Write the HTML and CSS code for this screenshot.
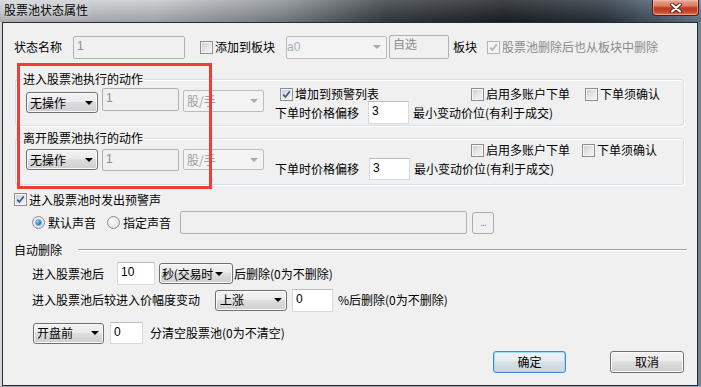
FILE: index.html
```html
<!DOCTYPE html>
<html lang="zh-CN">
<head>
    <meta charset="UTF-8">
    <meta name="viewport" content="width=device-width, initial-scale=1.0">
    <title>股票池状态属性</title>
    <link rel="stylesheet" href="styles.css">
</head>
<body>

<div class="window">
    <!-- Title bar -->
    <div class="titlebar">
        <span class="title">股票池状态属性</span>
        <div class="close-btn">
            <svg width="12" height="10" viewBox="0 0 12 10">
                <path d="M2 1.5 L10 8.5 M10 1.5 L2 8.5" stroke="#3b2622" stroke-width="4" stroke-linecap="round"/>
                <path d="M2 1.5 L10 8.5 M10 1.5 L2 8.5" stroke="#fff" stroke-width="2.2" stroke-linecap="round"/>
            </svg>
        </div>
    </div>

    <div class="client">
        <!-- Name / block row -->
        <div class="row row-name">
            <span>状态名称</span>
            <div class="edit disabled name-edit">1</div>
            <label class="check add-block"><span class="box"></span>添加到板块</label>
            <div class="combo disabled block-combo"><span class="combo-text">a0</span><span class="arrow"></span></div>
            <div class="edit disabled self-edit">自选</div>
            <span class="block-label">板块</span>
            <label class="check disabled del-too">
                <span class="box checked"><svg width="9" height="9" viewBox="0 0 9 9"><path d="M1.2 4.6 L3.4 7 L7.8 1.4" fill="none" stroke-width="1.7"/></svg></span>股票池删除后也从板块中删除
            </label>
        </div>

        <!-- Enter pool actions -->
        <div class="group group-enter">
            <span class="legend">进入股票池执行的动作</span>
            <div class="select action-select">无操作<span class="arrow"></span></div>
            <div class="edit disabled qty-edit">1</div>
            <div class="combo disabled unit-combo"><span class="combo-text">股/手</span><span class="arrow"></span></div>
            <div class="order-opts">
                <div class="opts-checks">
                    <label class="check warn-list">
                        <span class="box checked"><svg width="9" height="9" viewBox="0 0 9 9"><path d="M1.2 4.6 L3.4 7 L7.8 1.4" fill="none" stroke-width="1.7"/></svg></span>增加到预警列表
                    </label>
                    <label class="check multi"><span class="box"></span>启用多账户下单</label>
                    <label class="check confirm"><span class="box"></span>下单须确认</label>
                </div>
                <div class="opts-price">
                    <span>下单时价格偏移</span>
                    <div class="edit price-edit">3</div>
                    <span class="tick-text">最小变动价位(有利于成交)</span>
                </div>
            </div>
        </div>

        <!-- Leave pool actions -->
        <div class="group group-leave">
            <span class="legend">离开股票池执行的动作</span>
            <div class="select action-select">无操作<span class="arrow"></span></div>
            <div class="edit disabled qty-edit">1</div>
            <div class="combo disabled unit-combo"><span class="combo-text">股/手</span><span class="arrow"></span></div>
            <div class="order-opts">
                <div class="opts-checks">
                    <label class="check multi"><span class="box"></span>启用多账户下单</label>
                    <label class="check confirm"><span class="box"></span>下单须确认</label>
                </div>
                <div class="opts-price">
                    <span>下单时价格偏移</span>
                    <div class="edit price-edit">3</div>
                    <span class="tick-text">最小变动价位(有利于成交)</span>
                </div>
            </div>
        </div>

        <!-- Alarm sound -->
        <div class="row alarm-row">
            <label class="check">
                <span class="box checked"><svg width="9" height="9" viewBox="0 0 9 9"><path d="M1.2 4.6 L3.4 7 L7.8 1.4" fill="none" stroke-width="1.7"/></svg></span>进入股票池时发出预警声
            </label>
        </div>
        <div class="row sound-row">
            <label class="radio-item"><span class="radio on"></span>默认声音</label>
            <label class="radio-item second"><span class="radio"></span>指定声音</label>
            <div class="edit disabled sound-edit"></div>
            <div class="browse-btn">...</div>
        </div>

        <!-- Auto delete -->
        <div class="row autodel-row">
            <span>自动删除</span>
            <div class="sep"></div>
        </div>
        <div class="row sub-row after-row">
            <span>进入股票池后</span>
            <div class="edit sec-edit">10</div>
            <div class="select sec-select"><span class="sel-text">秒(交易时</span><span class="arrow"></span></div>
            <span class="after-text">后删除(0为不删除)</span>
        </div>
        <div class="row sub-row change-row">
            <span>进入股票池后较进入价幅度变动</span>
            <div class="select up-select">上涨<span class="arrow"></span></div>
            <div class="edit pct-edit">0</div>
            <span class="pct-text">%后删除(0为不删除)</span>
        </div>
        <div class="row clear-row">
            <div class="select open-select">开盘前<span class="arrow"></span></div>
            <div class="edit clear-edit">0</div>
            <span class="clear-text">分清空股票池(0为不清空)</span>
        </div>

        <!-- Dialog buttons -->
        <div class="row btn-row">
            <div class="btn default">确定</div>
            <div class="btn">取消</div>
        </div>

        <!-- red annotation frame -->
        <div class="mark"></div>
    </div>
</div>

</body>
</html>
```

FILE: styles.css
```css
* {
    box-sizing: border-box;
}

body {
    margin: 0;
    width: 701px;
    height: 387px;
    overflow: hidden;
    font-family: "Noto Sans CJK SC", "Liberation Sans", sans-serif;
    font-size: 12px;
    line-height: 14px;
    color: #000;
    white-space: nowrap;
}

.window {
    display: flex;
    flex-direction: column;
    height: 387px;
    background:
        linear-gradient(to top, #93a9c0 0, #93a9c0 1px, transparent 1px),
        linear-gradient(to bottom, rgba(255, 255, 255, 0.15), rgba(0, 0, 0, 0.2) 22px, transparent 22px),
        linear-gradient(to right, #d5d8db 0%, #c4c8cc 22%, #8d9399 40%, #3c4248 55%, #1e2328 72%, #2d3741 86%, #6f869e 100%);
}

/* title bar */
.titlebar {
    height: 22px;
    display: flex;
    align-items: flex-start;
    flex-shrink: 0;
}

.title {
    padding: 2px 0 0 4px;
    line-height: 16px;
    text-shadow: 0 0 6px rgba(255, 255, 255, 0.8);
}

.close-btn {
    margin-left: auto;
    margin-right: 2px;
    width: 47px;
    height: 16px;
    border: 1px solid #47201a;
    border-top: none;
    border-radius: 0 0 4px 4px;
    background: linear-gradient(#eaa898 0%, #d97a62 40%, #c23b20 52%, #c54528 78%, #dc7d58 100%);
    box-shadow: inset 0 0 0 1px rgba(255, 200, 180, 0.5);
    display: flex;
    align-items: center;
    justify-content: center;
}

/* dialog body */
.client {
    position: relative;
    flex: 1;
    margin: 0 3px 1px 2px;
    border: 1px solid #262b30;
    background: #f0f0f0;
    display: flex;
    flex-direction: column;
}

.row {
    display: flex;
    align-items: center;
    flex-shrink: 0;
}

/* edits */
.edit {
    border: 1px solid #d6dae0;
    border-top-color: #b9bdc3;
    background: #fff;
    padding: 2px 3px 0;
    font-family: "Liberation Sans", "Noto Sans CJK SC", sans-serif;
    line-height: 14px;
}

.edit.disabled {
    background: #f0f0f0;
    border-color: #adb2b5;
    border-radius: 2px;
    color: #8d8d8d;
}

/* enabled drop-down */
.select {
    display: flex;
    align-items: center;
    overflow: hidden;
    padding-left: 3px;
    border: 1px solid #707070;
    border-radius: 3px;
    background: linear-gradient(#f2f2f2 0%, #ebebeb 45%, #dddddd 50%, #cfcfcf 100%);
    box-shadow: inset 0 0 0 1px #fbfbfb;
}

.select .arrow {
    margin-left: auto;
    margin-right: 4px;
    flex-shrink: 0;
    width: 0;
    height: 0;
    border-left: 4px solid transparent;
    border-right: 4px solid transparent;
    border-top: 4px solid #000;
}

/* disabled combo */
.combo {
    display: flex;
    align-items: center;
    overflow: hidden;
    padding-left: 3px;
    border: 1px solid #bdbdbd;
    border-radius: 2px;
    background: #f3f3f3;
    color: #a0a0a0;
}

.combo .arrow {
    margin-left: auto;
    margin-right: 5px;
    width: 0;
    height: 0;
    border-left: 4px solid transparent;
    border-right: 4px solid transparent;
    border-top: 4px solid #a8a8a8;
}

/* checkbox */
.check {
    display: flex;
    align-items: center;
}

.box {
    width: 13px;
    height: 13px;
    margin-right: 2px;
    flex-shrink: 0;
    border: 1px solid #8e8f8f;
    background: linear-gradient(135deg, #c9ccd1 0%, #e6e7e9 55%, #f7f7f7 100%);
    box-shadow: inset 0 0 0 1px #f4f4f4;
    display: flex;
    align-items: center;
    justify-content: center;
}

.box svg path {
    stroke: #3a5a92;
}

.check.disabled .box {
    border-color: #b4b4b4;
    background: #f4f4f4;
}

.check.disabled .box svg path {
    stroke: #b5b5b5;
}

/* radio */
.radio-item {
    display: flex;
    align-items: center;
}

.radio {
    width: 13px;
    height: 13px;
    margin-right: 3px;
    border: 1px solid #8e8f8f;
    border-radius: 50%;
    background: radial-gradient(circle at 40% 40%, #ffffff 0%, #e4e6e9 60%, #c9ccd1 100%);
    display: flex;
    align-items: center;
    justify-content: center;
}

.radio.on::after {
    content: "";
    width: 5px;
    height: 5px;
    border-radius: 50%;
    background: radial-gradient(circle at 35% 35%, #9bd6ff 0%, #2a78c8 55%, #164f98 100%);
    box-shadow: 0 0 0 1px #7fb3e0;
}

/* name row */
.row-name {
    margin-top: 12px;
    height: 24px;
    padding-left: 11px;
}

.name-edit {
    margin-left: 11px;
    width: 112px;
    height: 23px;
}

.add-block {
    margin-left: 15px;
}

.block-combo {
    margin-left: 11px;
    width: 101px;
    height: 23px;
    color: #a6aec0;
    font-family: "Liberation Sans", sans-serif;
}

.block-combo .combo-text {
    margin-left: -3px;
}

.self-edit {
    margin-left: 2px;
    width: 60px;
    height: 24px;
    color: #6a6a6a;
}

.block-label {
    margin-left: 4px;
}

.del-too {
    margin-left: 10px;
    color: #8a8a8a;
}

/* group boxes */
.group {
    position: relative;
    flex-shrink: 0;
    margin-left: 12px;
    width: 669px;
    height: 47px;
    border: 1px solid #d5dfe5;
    border-radius: 3px;
    box-shadow: inset 1px 1px 0 #fff, 1px 1px 0 #fff;
    display: flex;
    align-items: flex-start;
}

.legend {
    position: absolute;
    top: -8px;
    left: 6px;
    padding: 0 1px;
    background: #f0f0f0;
}

.group-enter {
    margin-top: 20px;
}

.group-leave {
    margin-top: 12px;
}

.action-select {
    margin-left: 10px;
    width: 72px;
    height: 21px;
}

.qty-edit {
    margin-left: 4px;
    width: 77px;
}

.unit-combo {
    margin-left: 4px;
    width: 81px;
    margin-top: 10px;
}

.order-opts {
    margin-left: 11px;
}

.opts-checks {
    display: flex;
    align-items: center;
    height: 14px;
}

.opts-price {
    display: flex;
    align-items: center;
}

.price-edit {
    width: 41px;
}

.tick-text {
    margin-left: 4px;
}

.group-enter .action-select { margin-top: 12px; }
.group-enter .qty-edit { margin-top: 8px; height: 23px; }
.group-enter .unit-combo { height: 22px; }
.group-enter .order-opts { margin-top: 7px; }
.group-enter .warn-list { margin-left: 5px; }
.group-enter .multi { margin-left: 92px; }
.group-enter .confirm { margin-left: 15px; }
.group-enter .opts-price { height: 23px; }
.group-enter .price-edit { margin-left: 9px; height: 23px; }

.group-leave .action-select { margin-top: 10px; }
.group-leave .qty-edit { margin-top: 10px; height: 22px; }
.group-leave .unit-combo { height: 21px; }
.group-leave .order-opts { margin-top: 4px; }
.group-leave .multi { margin-left: 196px; }
.group-leave .confirm { margin-left: 12px; }
.group-leave .opts-price { margin-top: 1px; height: 22px; }
.group-leave .price-edit { margin-left: 10px; height: 22px; }

/* alarm sound */
.alarm-row {
    margin-top: 8px;
    height: 13px;
    padding-left: 11px;
}

.sound-row {
    margin-top: 5px;
    height: 23px;
    padding-left: 29px;
}

.radio-item.second {
    margin-left: 11px;
}

.sound-edit {
    margin-left: 9px;
    width: 287px;
    height: 23px;
}

.browse-btn {
    margin-left: 5px;
    width: 22px;
    height: 22px;
    border: 1px solid #adadad;
    border-radius: 3px;
    background: #f0f0f0;
    color: #8c84b8;
    font-family: "Liberation Sans", sans-serif;
    font-size: 11px;
    line-height: 18px;
    text-align: center;
    letter-spacing: -1px;
}

/* auto delete */
.autodel-row {
    margin-top: 9px;
    height: 14px;
    padding-left: 11px;
}

.sep {
    flex: 1;
    margin: 0 10px 0 16px;
    height: 2px;
    border-top: 1px solid #a0a0a0;
    border-bottom: 1px solid #fff;
}

.sub-row {
    padding-left: 29px;
}

.after-row {
    margin-top: 5px;
    height: 23px;
}

.sec-edit {
    margin-left: 13px;
    width: 38px;
    height: 23px;
}

.sec-select {
    margin-left: 4px;
    width: 74px;
    height: 21px;
    padding-left: 2px;
}

.sec-select .sel-text {
    flex-shrink: 0;
    letter-spacing: -0.2px;
}

.sec-select .arrow {
    margin-left: 2px;
    margin-right: 4px;
}

.after-text {
    margin-left: 1px;
}

.change-row {
    margin-top: 3px;
    height: 24px;
}

.up-select {
    margin-left: 15px;
    width: 72px;
    height: 21px;
    padding-left: 4px;
}

.pct-edit {
    margin-left: 5px;
    width: 41px;
    height: 23px;
}

.pct-text {
    margin-left: 5px;
}

.clear-row {
    margin-top: 10px;
    height: 22px;
    padding-left: 30px;
}

.open-select {
    width: 71px;
    height: 21px;
}

.clear-edit {
    margin-left: 6px;
    width: 33px;
    height: 22px;
}

.clear-text {
    margin-left: 7px;
}

/* buttons */
.btn-row {
    margin-top: 7px;
    height: 22px;
    justify-content: flex-end;
    padding-right: 13px;
    gap: 44px;
}

.btn {
    width: 74px;
    height: 22px;
    border: 1px solid #707070;
    border-radius: 3px;
    background: linear-gradient(#f2f2f2 0%, #ebebeb 45%, #dddddd 50%, #cfcfcf 100%);
    box-shadow: inset 0 0 0 1px #fcfcfc;
    display: flex;
    align-items: center;
    justify-content: center;
}

.btn.default {
    width: 73px;
    border-color: #3c8dc4;
    box-shadow: inset 0 0 0 1px #9fdcf7;
    background: linear-gradient(#eef3f6 0%, #e5ebef 45%, #d8e0e6 50%, #cbd5dc 100%);
}

/* red annotation */
.mark {
    position: absolute;
    left: 14px;
    top: 40px;
    width: 195px;
    height: 126px;
    border: 3px solid #f23c3c;
}
```
